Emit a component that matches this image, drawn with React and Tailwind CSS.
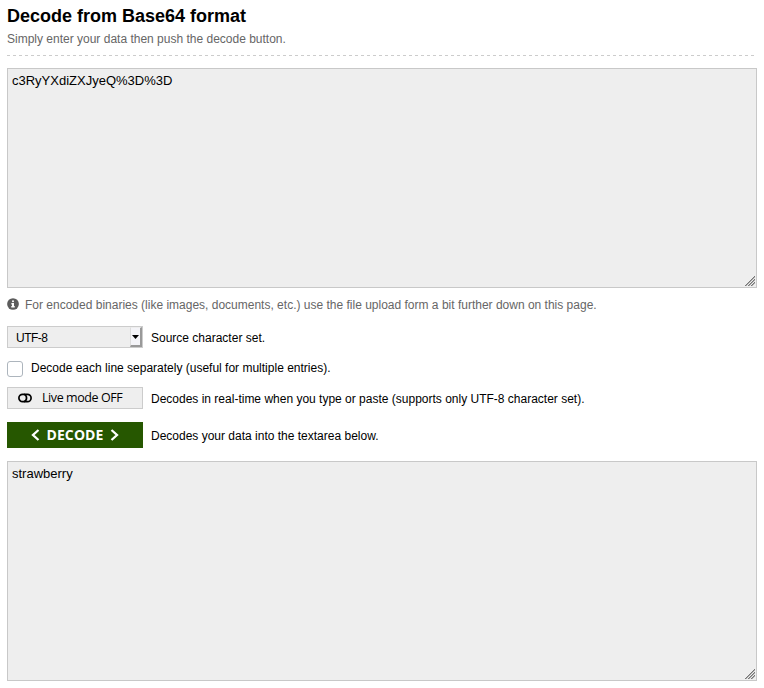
function ResizeGrip() {
  return (
    <svg className="absolute right-px bottom-px" width="10" height="11" viewBox="0 0 10 11" fill="none" shapeRendering="crispEdges">
      <path d="M0 10h1v1H0zM1 9h1v1H1zM2 8h1v1H2zM3 7h1v1H3zM4 6h1v1H4zM5 5h1v1H5zM6 4h1v1H6zM7 3h1v1H7zM8 2h1v1H8zM9 1h1v1H9zM3 10h1v1H3zM4 9h1v1H4zM5 8h1v1H5zM6 7h1v1H6zM7 6h1v1H7zM8 5h1v1H8zM9 4h1v1H9zM6 10h1v1H6zM7 9h1v1H7zM8 8h1v1H8zM9 7h1v1H9z" fill="#777" />
      <path d="M1 10h1v1H1zM2 9h1v1H2zM3 8h1v1H3zM4 7h1v1H4zM5 6h1v1H5zM6 5h1v1H6zM7 4h1v1H7zM8 3h1v1H8zM9 2h1v1H9zM4 10h1v1H4zM5 9h1v1H5zM6 8h1v1H6zM7 7h1v1H7zM8 6h1v1H8zM9 5h1v1H9zM7 10h1v1H7zM8 9h1v1H8zM9 8h1v1H9z" fill="#aaa" />
    </svg>
  );
}

function TextBox({ children }) {
  return (
    <div className="relative h-[220px] border border-[#c8c8c8] bg-[#eee] px-1 pt-1 text-[13px] leading-[15px]">
      {children}
      <ResizeGrip />
    </div>
  );
}

export default function App() {
  return (
    <main className="h-[688px] w-[764px] overflow-hidden bg-white px-[7px] font-['Liberation_Sans',sans-serif] text-[12px] text-black">
      <header className="mb-3 h-14">
        <h1 className="h-8 pt-[5px] text-[18px] leading-[22px] font-bold">Decode from Base64 format</h1>
        <p className="leading-[14px] text-[#666]">Simply enter your data then push the decode button.</p>
        <svg className="mt-[9px] block" width="750" height="1">
          <path d="M0 .5H750" stroke="#ccc" strokeDasharray="3.01 2.99" />
        </svg>
      </header>

      <TextBox>c3RyYXdiZXJyeQ%3D%3D</TextBox>

      <div className="mt-[9px] flex h-[14px] items-center text-[#666]">
        <svg className="mr-1.5 shrink-0" width="12" height="12" viewBox="0 0 512 512">
          <circle cx="256" cy="256" r="250" fill="#5c5c5c" />
          <circle cx="256" cy="138" r="44" fill="#fff" />
          <path d="M186 214h112v132h32v60H182v-60h32v-72h-28z" fill="#fff" />
        </svg>
        <span className="pt-0.5">For encoded binaries (like images, documents, etc.) use the file upload form a bit further down on this page.</span>
      </div>

      <div className="mt-[15px] flex h-[22px] items-center gap-2">
        <div className="flex h-[22px] w-[136px] items-center justify-between border border-[#ccc] bg-[#eee] pl-2">
          <span className="pt-px tracking-[-0.5px]">UTF-8</span>
          <span className="flex h-5 w-3 items-center justify-center border-t border-r-2 border-b-2 border-l border-t-[#eee] border-r-[#999] border-b-[#999] border-l-[#ddd] bg-[#f4f4f8]">
            <svg width="7" height="4" viewBox="0 0 7 4"><path d="M0 0h7L3.5 4z" /></svg>
          </span>
        </div>
        <span className="pt-px">Source character set.</span>
      </div>

      <div className="mt-[13px] flex h-4 items-center gap-2">
        <span className="size-4 rounded-[3px] border border-[#adb5bd] bg-white" />
        <span className="-mt-[3px]">Decode each line separately (useful for multiple entries).</span>
      </div>

      <div className="mt-2.5 flex h-[22px] items-center gap-2">
        <button className="flex h-[22px] w-[136px] items-center border border-[#ccc] bg-[#eee] pl-[10px] font-['Open_Sans',sans-serif] text-[12.5px] tracking-[-0.42px]">
          <svg className="mr-[10px] shrink-0" width="14" height="10" viewBox="0 0 14 10" fill="none" stroke="#000" strokeWidth="1.7">
            <rect x=".9" y="1.3" width="12.2" height="7.4" rx="3.7" />
            <path d="M6 1.3c3.4 1.3 3.4 6.1 0 7.4" />
          </svg>
          <span className="whitespace-nowrap">Live mode OFF</span>
        </button>
        <span className="pt-px">Decodes in real-time when you type or paste (supports only UTF-8 character set).</span>
      </div>

      <div className="mt-[13px] flex h-[26px] items-center gap-2">
        <button className="flex h-[26px] w-[136px] items-center justify-center gap-1.5 bg-[#265700] font-['Open_Sans',sans-serif] text-[14px] font-bold text-white">
          <svg width="9" height="12" viewBox="0 0 9 12" fill="none" stroke="#fff" strokeWidth="2.3"><path d="M7.5 1L2 6l5.5 5" /></svg>
          <span className="-mt-0.5 tracking-[0.1px]">DECODE</span>
          <svg width="9" height="12" viewBox="0 0 9 12" fill="none" stroke="#fff" strokeWidth="2.3"><path d="M1.5 1L7 6l-5.5 5" /></svg>
        </button>
        <span className="pt-px">Decodes your data into the textarea below.</span>
      </div>

      <div className="mt-[13px]">
        <TextBox>strawberry</TextBox>
      </div>
    </main>
  );
}
